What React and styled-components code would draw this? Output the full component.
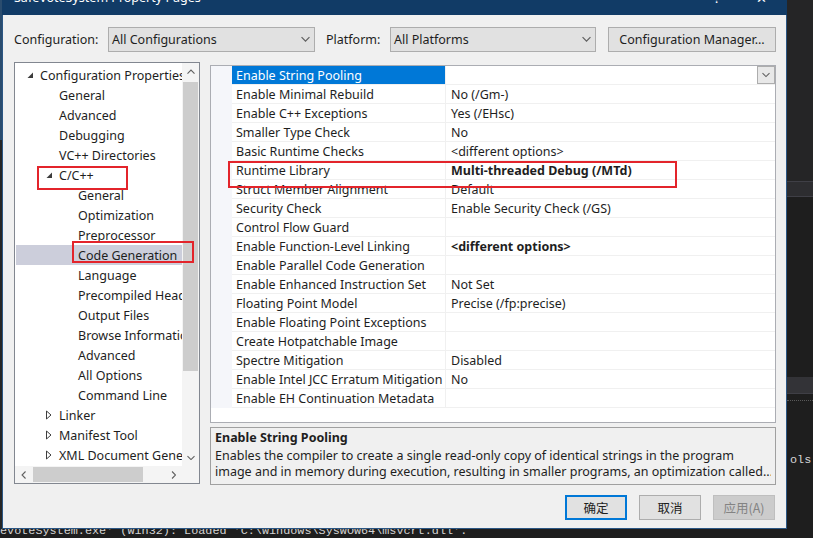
import React from "react";
import styled, { createGlobalStyle } from "styled-components";

const UI = `"Noto Sans", "Noto Sans CJK SC", sans-serif`;
const MONO = `"Liberation Mono", "DejaVu Sans Mono", monospace`;

const GlobalStyle = createGlobalStyle`
  html, body { margin: 0; padding: 0; background: #1e1e1e; overflow: hidden; }
  body { font-family: ${UI}; }
  * { box-sizing: border-box; }
`;

const Screen = styled.div`
  position: relative;
  width: 813px;
  height: 538px;
  display: flex;
  flex-direction: column;
  background: #1e1e1e;
  overflow: hidden;
  font-family: ${UI};
  font-size: 12.5px;
  color: #1e1e1e;
`;

const Desktop = styled.div`
  display: flex;
  height: 529px;
  flex: none;
`;

const LeftStrip = styled.div`
  width: 2px;
  background: linear-gradient(#2a4c6e 0 140px, #262626 140px);
`;

const RightStrip = styled.div`
  flex: 1;
  display: flex;
  flex-direction: column;
`;

const Block = styled.div`
  height: ${(p) => p.h}px;
  flex: none;
  background: ${(p) => p.bg || "#1e1e1e"};
  ${(p) => p.dotted && "border-top: 1px dotted #5a5a5a;"}
`;

const BgText = styled.div`
  font-family: ${MONO};
  font-size: 11.8px;
  color: #d4d4d4;
  white-space: nowrap;
  padding-left: ${(p) => p.pl || 0}px;
  margin-top: ${(p) => p.mt || 0}px;
  line-height: 13px;
`;

const Console = styled.div`
  flex: 1;
  overflow: hidden;
  background: #1e1e1e;
`;

const Dialog = styled.div`
  width: 785px;
  height: 529px;
  flex: none;
  display: flex;
  flex-direction: column;
  background: #f0f0f0;
  border: 1px solid #2b5683;
  border-top: none;
`;

const TitleBar = styled.div`
  height: 15px;
  flex: none;
  display: flex;
  background: #113b66;
  color: #fff;
  overflow: hidden;
  margin: 0 -1px;
  padding-left: 12px;
  padding-right: 20px;
`;

const TitleText = styled.div`
  font-size: 12.5px;
  line-height: 16px;
  margin-top: -10px;
  white-space: nowrap;
`;

const TitleButtons = styled.div`
  margin-left: auto;
  display: flex;
  gap: 36px;
  font-size: 13px;
  line-height: 16px;
  margin-top: -10px;
`;

const Toolbar = styled.div`
  display: flex;
  align-items: center;
  height: 25px;
  margin-top: 12px;
  padding-left: 11px;
  flex: none;
`;

const Label = styled.div`
  width: ${(p) => p.w}px;
  white-space: nowrap;
`;

const Combo = styled.div`
  width: ${(p) => p.w}px;
  height: 25px;
  display: flex;
  align-items: center;
  justify-content: space-between;
  padding: 0 4px 0 3px;
  background: #e1e1e1;
  border: 1px solid #adadad;
  margin-right: ${(p) => p.mr || 0}px;
`;

const Button = styled.div`
  width: ${(p) => p.w}px;
  height: 25px;
  display: flex;
  align-items: center;
  justify-content: center;
  background: ${(p) => (p.disabled ? "#cccccc" : "#e1e1e1")};
  border: ${(p) => (p.primary ? "2px solid #0078d7" : p.disabled ? "1px solid #bfbfbf" : "1px solid #adadad")};
  color: ${(p) => (p.disabled ? "#838383" : "#1e1e1e")};
  white-space: nowrap;
`;

const Body = styled.div`
  display: flex;
  gap: 10px;
  margin-top: 10px;
  padding-left: 11px;
  flex: none;
`;

const TreeFrame = styled.div`
  width: 186px;
  height: 422px;
  border: 1px solid #828790;
  background: #fff;
  display: grid;
  grid-template-columns: 1fr 17px;
  grid-template-rows: 1fr 17px;
`;

const TreeList = styled.div`
  overflow: hidden;
  padding: 2px 0 0 1px;
`;

const TreeRow = styled.div`
  height: 20px;
  display: flex;
  align-items: center;
  white-space: nowrap;
  padding-left: ${(p) => 8 + p.level * 19}px;
  background: ${(p) => (p.selected ? "#cccedb" : "transparent")};
`;

const Toggle = styled.div`
  width: 16px;
  flex: none;
  display: flex;
  align-items: center;
  padding-left: 3px;
  height: 20px;
`;

const VScroll = styled.div`
  display: flex;
  flex-direction: column;
  background: #f4f4f4;
`;

const HScroll = styled.div`
  display: flex;
  background: #f4f4f4;
`;

const Corner = styled.div`
  background: #f4f4f4;
`;

const ArrowBox = styled.div`
  width: 17px;
  height: 17px;
  flex: none;
  display: flex;
  align-items: center;
  justify-content: center;
`;

const VThumb = styled.div`
  width: 15px;
  height: 289px;
  margin: 2px 1px 0;
  background: #cdcdcd;
`;

const HThumb = styled.div`
  width: 110px;
  height: 15px;
  margin: 1px 0 1px 1px;
  background: #cdcdcd;
`;

const Spacer = styled.div`
  flex: 1;
`;

const RightCol = styled.div`
  display: flex;
  flex-direction: column;
  gap: 4px;
  padding-top: 3px;
`;

const Grid = styled.div`
  width: 566px;
  height: 358px;
  border: 1px solid #abadb3;
  background: #fff;
`;

const GridRow = styled.div`
  display: flex;
  height: 19px;
`;

const Gutter = styled.div`
  width: 21px;
  flex: none;
  background: #f5f6fa;
`;

const NameCell = styled.div`
  width: 214px;
  flex: none;
  height: 19px;
  line-height: 16px;
  padding: 2px 0 0 4px;
  white-space: nowrap;
  overflow: hidden;
  border-bottom: 1px solid #f0f0f0;
  border-right: 1px solid #f0f0f0;
  background: ${(p) => (p.selected ? "#0078d7" : "transparent")};
  color: ${(p) => (p.selected ? "#fff" : "#1e1e1e")};
`;

const ValueCell = styled.div`
  flex: 1;
  height: 19px;
  display: flex;
  justify-content: space-between;
  line-height: 16px;
  padding: 2px 0 0 5px;
  white-space: nowrap;
  border-bottom: 1px solid #f0f0f0;
  font-weight: ${(p) => (p.bold ? 700 : 400)};
`;

const DropButton = styled.div`
  width: 18px;
  height: 18px;
  margin-top: -2px;
  display: flex;
  align-items: center;
  justify-content: center;
  background: #e8e8e8;
  border: 1px solid #adadad;
`;

const Desc = styled.div`
  width: 566px;
  height: 58px;
  border: 1px solid #a0a0a0;
  padding: 1px 4px 0 4px;
`;

const DescTitle = styled.div`
  font-weight: 700;
  line-height: 17px;
  margin-bottom: 2px;
`;

const DescLine = styled.div`
  line-height: 16px;
  white-space: nowrap;
  overflow: hidden;
`;

const Footer = styled.div`
  display: flex;
  justify-content: flex-end;
  gap: 12px;
  margin-top: 10px;
  padding-right: 11px;
  font-family: "Noto Sans CJK SC", ${UI};
`;

const RedBox = styled.div`
  position: absolute;
  left: ${(p) => p.x}px;
  top: ${(p) => p.y}px;
  width: ${(p) => p.w}px;
  height: ${(p) => p.h}px;
  border: 2px solid #e3242b;
  pointer-events: none;
`;

const Chevron = ({ dir = "down", size = 8, color = "#606060" }) => {
  const pts = {
    down: "0.5,1 4,4.5 7.5,1",
    up: "0.5,4.5 4,1 7.5,4.5",
    left: "4.5,0.5 1,4 4.5,7.5",
    right: "1,0.5 4.5,4 1,7.5",
  }[dir];
  const vb = dir === "down" || dir === "up" ? "0 0 8 5.5" : "0 0 5.5 8";
  const w = dir === "down" || dir === "up" ? size : size * 0.7;
  const h = dir === "down" || dir === "up" ? size * 0.7 : size;
  return (
    <svg width={w} height={h} viewBox={vb}>
      <polyline points={pts} fill="none" stroke={color} strokeWidth="1.1" />
    </svg>
  );
};

const Expanded = () => (
  <svg width="7" height="7" viewBox="0 0 7 7">
    <polygon points="6,0.5 6,6 0.5,6" fill="#3c3c3c" />
  </svg>
);

const Collapsed = () => (
  <svg width="6" height="10" viewBox="0 0 6 10">
    <polygon points="0.5,1 5,5 0.5,9" fill="none" stroke="#3c3c3c" strokeWidth="1" />
  </svg>
);

const tree = [
  { level: 0, text: "Configuration Properties", exp: "open" },
  { level: 1, text: "General" },
  { level: 1, text: "Advanced" },
  { level: 1, text: "Debugging" },
  { level: 1, text: "VC++ Directories" },
  { level: 1, text: "C/C++", exp: "open" },
  { level: 2, text: "General" },
  { level: 2, text: "Optimization" },
  { level: 2, text: "Preprocessor" },
  { level: 2, text: "Code Generation", selected: true },
  { level: 2, text: "Language" },
  { level: 2, text: "Precompiled Headers" },
  { level: 2, text: "Output Files" },
  { level: 2, text: "Browse Information" },
  { level: 2, text: "Advanced" },
  { level: 2, text: "All Options" },
  { level: 2, text: "Command Line" },
  { level: 1, text: "Linker", exp: "closed" },
  { level: 1, text: "Manifest Tool", exp: "closed" },
  { level: 1, text: "XML Document Generator", exp: "closed" },
];

const props = [
  ["Enable String Pooling", "", { selected: true }],
  ["Enable Minimal Rebuild", "No (/Gm-)"],
  ["Enable C++ Exceptions", "Yes (/EHsc)"],
  ["Smaller Type Check", "No"],
  ["Basic Runtime Checks", "<different options>"],
  ["Runtime Library", "Multi-threaded Debug (/MTd)", { bold: true }],
  ["Struct Member Alignment", "Default"],
  ["Security Check", "Enable Security Check (/GS)"],
  ["Control Flow Guard", ""],
  ["Enable Function-Level Linking", "<different options>", { bold: true }],
  ["Enable Parallel Code Generation", ""],
  ["Enable Enhanced Instruction Set", "Not Set"],
  ["Floating Point Model", "Precise (/fp:precise)"],
  ["Enable Floating Point Exceptions", ""],
  ["Create Hotpatchable Image", ""],
  ["Spectre Mitigation", "Disabled"],
  ["Enable Intel JCC Erratum Mitigation", "No"],
  ["Enable EH Continuation Metadata", ""],
];

export default function App() {
  return (
    <>
      <GlobalStyle />
      <Screen>
        <Desktop>
          <LeftStrip />
          <Dialog>
            <TitleBar>
              <TitleText>SafeVoteSystem Property Pages</TitleText>
              <TitleButtons>
                <span>?</span>
                <span>✕</span>
              </TitleButtons>
            </TitleBar>
            <Toolbar>
              <Label w={94}>Configuration:</Label>
              <Combo w={207} mr={11}>
                <span>All Configurations</span>
                <Chevron dir="down" size={9} />
              </Combo>
              <Label w={64}>Platform:</Label>
              <Combo w={206} mr={12}>
                <span>All Platforms</span>
                <Chevron dir="down" size={9} />
              </Combo>
              <Button w={168}>Configuration Manager...</Button>
            </Toolbar>
            <Body>
              <TreeFrame>
                <TreeList>
                  {tree.map((r, i) => (
                    <TreeRow key={i} level={r.level} selected={r.selected}>
                      <Toggle>
                        {r.exp === "open" && <Expanded />}
                        {r.exp === "closed" && <Collapsed />}
                      </Toggle>
                      {r.text}
                    </TreeRow>
                  ))}
                </TreeList>
                <VScroll>
                  <ArrowBox>
                    <Chevron dir="up" size={8} />
                  </ArrowBox>
                  <VThumb />
                  <Spacer />
                  <ArrowBox>
                    <Chevron dir="down" size={8} />
                  </ArrowBox>
                </VScroll>
                <HScroll>
                  <ArrowBox>
                    <Chevron dir="left" size={8} />
                  </ArrowBox>
                  <HThumb />
                  <Spacer />
                  <ArrowBox>
                    <Chevron dir="right" size={8} />
                  </ArrowBox>
                </HScroll>
                <Corner />
              </TreeFrame>
              <RightCol>
                <Grid>
                  {props.map(([n, v, o = {}], i) => (
                    <GridRow key={i}>
                      <Gutter />
                      <NameCell selected={o.selected}>{n}</NameCell>
                      <ValueCell bold={o.bold}>
                        <span>{v}</span>
                        {o.selected && (
                          <DropButton>
                            <Chevron dir="down" size={8} />
                          </DropButton>
                        )}
                      </ValueCell>
                    </GridRow>
                  ))}
                </Grid>
                <Desc>
                  <DescTitle>Enable String Pooling</DescTitle>
                  <DescLine>
                    Enables the compiler to create a single read-only copy of identical strings in the program
                  </DescLine>
                  <DescLine>
                    image and in memory during execution, resulting in smaller programs, an optimization called...
                  </DescLine>
                </Desc>
              </RightCol>
            </Body>
            <Footer>
              <Button w={62} primary>确定</Button>
              <Button w={62}>取消</Button>
              <Button w={62} disabled>应用(A)</Button>
            </Footer>
          </Dialog>
          <RightStrip>
            <Block h={181} bg="#252526" />
            <Block h={1} bg="#3f3f46" />
            <Block h={14} bg="#2d2d30" />
            <Block h={1} bg="#3f3f46" />
            <Block h={180} />
            <Block h={16} bg="#333337" />
            <Block h={1} bg="#3f3f46" />
            <Block h={6} />
            <Block h={4} dotted />
            <BgText mt={50} pl={3}>ols</BgText>
          </RightStrip>
        </Desktop>
        <Console>
          <BgText mt={-4}>evoteSystem.exe' (Win32): Loaded 'C:\Windows\SysWOW64\msvcrt.dll'.</BgText>
        </Console>
        <RedBox x={37} y={166} w={91} h={24} />
        <RedBox x={72} y={241} w={122} h={22} />
        <RedBox x={228} y={161} w={449} h={27} />
      </Screen>
    </>
  );
}
